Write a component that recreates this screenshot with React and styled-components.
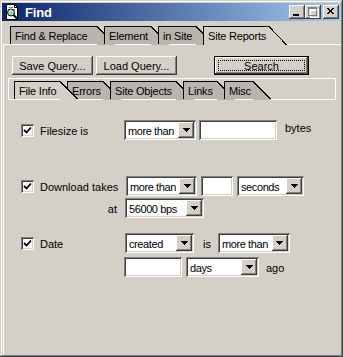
import React from 'react';
import styled, { createGlobalStyle } from 'styled-components';

const face = '#D4D0C8';
const shadow = '#808080';
const dark = '#404040';
const tabFill = '#B9B5AE';

const raised = `inset -1px -1px ${dark}, inset 1px 1px #fff, inset -2px -2px ${shadow}, inset 2px 2px ${face}`;
const sunken = `inset 1px 1px ${shadow}, inset -1px -1px #fff, inset 2px 2px ${dark}, inset -2px -2px ${face}`;

const GlobalStyle = createGlobalStyle`
  html, body {
    margin: 0;
    padding: 0;
    background: ${face};
  }
  body {
    font-family: "Liberation Sans", Arial, sans-serif;
    font-size: 11px;
    color: #000;
  }
  * {
    box-sizing: border-box;
  }
`;

const Window = styled.div`
  width: 343px;
  height: 357px;
  background: ${face};
  padding: 3px 2px 2px 2px;
  display: flex;
  flex-direction: column;
  box-shadow: inset -1px -1px ${dark}, inset 1px 1px ${face}, inset -2px -2px ${shadow}, inset 2px 2px #fff;
`;

const TitleBar = styled.div`
  height: 18px;
  display: flex;
  align-items: center;
  padding: 0 2px;
  background: linear-gradient(to right, #0a246a, #a6caf0);
`;

const TitleText = styled.span`
  margin-left: 5px;
  flex: 1;
  color: #fff;
  font-weight: bold;
  font-size: 13px;
  letter-spacing: -0.2px;
`;

const CapButton = styled.div`
  width: 16px;
  height: 14px;
  margin-left: ${p => p.$gap || 0}px;
  background: ${face};
  box-shadow: ${raised};
  display: flex;
  align-items: center;
  justify-content: center;
`;

const Body = styled.div`
  flex: 1;
  display: flex;
  flex-direction: column;
  margin-top: 5px;
`;

const TabStrip = styled.div`
  display: flex;
  height: 18px;
  padding-left: ${p => p.$inset}px;
`;

const TabShape = styled.div`
  position: relative;
  z-index: ${p => (p.$active ? 5 : 1)};
  width: ${p => p.$w}px;
  height: ${p => (p.$cover ? 19 : 18)}px;
  margin-left: ${p => (p.$first ? 0 : -10)}px;
  margin-right: 17px;
  padding-left: 4px;
  background: ${p => (p.$active ? face : tabFill)};
  border-top: 1px solid #000;
  border-left: 1px solid #000;
  line-height: 18px;
  letter-spacing: -0.2px;
  white-space: nowrap;
`;

const Slant = styled.svg`
  position: absolute;
  left: 100%;
  top: -1px;
  width: 18px;
  height: calc(100% + 1px);
  overflow: visible;
`;

const Panel = styled.div`
  flex: 1;
  margin-left: 1px;
  border-top: 1px solid #fff;
  border-left: 1px solid #fff;
  padding-top: 11px;
  display: flex;
  flex-direction: column;
`;

const ButtonRow = styled.div`
  display: flex;
  height: 19px;
  margin-left: 8px;
`;

const Button = styled.div`
  width: ${p => p.$w}px;
  height: 19px;
  margin-left: ${p => p.$ml || 0}px;
  background: ${face};
  box-shadow: ${raised};
  display: flex;
  align-items: center;
  justify-content: center;
  white-space: nowrap;
`;

const DefaultButton = styled(Button)`
  border: 1px solid #000;
  padding: 3px;
`;

const FocusRing = styled.span`
  flex: 1;
  align-self: stretch;
  display: flex;
  align-items: center;
  justify-content: center;
  border: 1px dotted #000;
`;

const SubFrame = styled.div`
  width: 328px;
  margin: 3px 0 0 4px;
  border: 1px solid #fff;
  padding: 2px 0 0 5px;
`;

const Form = styled.div`
  margin-top: 20px;
  padding-left: 17px;
  display: flex;
  flex-direction: column;
`;

const Row = styled.div`
  display: flex;
  align-items: center;
  height: 20px;
  margin-top: ${p => p.$mt || 0}px;
`;

const Lead = styled.div`
  width: 103px;
  display: flex;
  align-items: center;
  justify-content: ${p => (p.$right ? 'flex-end' : 'flex-start')};
  padding-right: ${p => (p.$right ? 7 : 0)}px;
`;

const Check = styled.span`
  width: 13px;
  height: 13px;
  margin-right: 6px;
  background: #fff;
  box-shadow: ${sunken};
  display: flex;
  align-items: center;
  justify-content: center;
`;

const Text = styled.span`
  margin-left: ${p => p.$ml || 0}px;
  margin-top: ${p => (p.$up ? -4 : 2)}px;
  white-space: nowrap;
`;

const Select = styled.div`
  width: ${p => p.$w}px;
  height: 20px;
  margin-left: ${p => p.$ml || 0}px;
  padding: 2px;
  background: #fff;
  box-shadow: ${sunken};
  display: flex;
  align-items: center;
`;

const SelectText = styled.span`
  flex: 1;
  min-width: 0;
  padding-left: 2px;
  padding-top: 1px;
  letter-spacing: -0.4px;
  white-space: nowrap;
  overflow: hidden;
`;

const DropButton = styled.span`
  flex: none;
  width: 16px;
  height: 16px;
  background: ${face};
  box-shadow: ${raised};
  display: flex;
  align-items: center;
  justify-content: center;
`;

const Input = styled.div`
  width: ${p => p.$w}px;
  height: 20px;
  margin-left: ${p => p.$ml || 0}px;
  background: #fff;
  box-shadow: ${sunken};
`;

const FindIcon = () => (
  <svg width="16" height="16" viewBox="0 0 16 16">
    <path d="M2.5 0.5H10.5L13.5 3.5V15.5H2.5Z" fill="#fff" stroke="#000" />
    <path d="M10.5 0.5V3.5H13.5" fill="none" stroke="#000" />
    <path d="M4.5 3.5H9M4.5 5.5H11" stroke="#808080" />
    <circle cx="7" cy="8.5" r="3.5" fill="#8fe0b0" stroke="#000" />
    <path d="M5.5 7.5a2 2 0 0 1 2-1.5" stroke="#fff" fill="none" />
    <path d="M9.5 11L13 14.5" stroke="#000" strokeWidth="2" />
  </svg>
);

const Arrow = () => (
  <svg width="7" height="4" viewBox="0 0 7 4" shapeRendering="crispEdges">
    <path d="M0 0H7L3.5 4Z" fill="#000" />
  </svg>
);

const Tick = () => (
  <svg width="9" height="9" viewBox="0 0 9 9">
    <path d="M1 4L3.5 6.5L8 1.5" fill="none" stroke="#000" strokeWidth="1.8" />
  </svg>
);

const Tab = ({ w, active, cover, first, children }) => (
  <TabShape $w={w} $active={active} $cover={cover} $first={first}>
    {children}
    <Slant viewBox="0 0 18 18" preserveAspectRatio="none" shapeRendering="crispEdges">
      <path d="M0 0L18 18V19H0Z" fill={active ? face : tabFill} />
      <path d="M0 0.5L17.5 18" stroke="#000" fill="none" />
    </Slant>
  </TabShape>
);

const Combo = ({ w, ml, children }) => (
  <Select $w={w} $ml={ml}>
    <SelectText>{children}</SelectText>
    <DropButton>
      <Arrow />
    </DropButton>
  </Select>
);

const CheckBox = () => (
  <Check>
    <Tick />
  </Check>
);

export default function App() {
  return (
    <>
      <GlobalStyle />
      <Window>
        <TitleBar>
          <FindIcon />
          <TitleText>Find</TitleText>
          <CapButton>
            <svg width="16" height="14" shapeRendering="crispEdges">
              <rect x="4" y="9" width="6" height="2" fill="#000" />
            </svg>
          </CapButton>
          <CapButton>
            <svg width="16" height="14" shapeRendering="crispEdges">
              <path d="M4.5 3.5H12.5V11.5H4.5Z M4.5 4.5H12.5" fill="none" stroke="#fff" transform="translate(1 1)" />
              <path d="M3.5 2.5H11.5V10.5H3.5Z M3.5 3.5H11.5" fill="none" stroke={shadow} />
            </svg>
          </CapButton>
          <CapButton $gap={2}>
            <svg width="16" height="14" shapeRendering="crispEdges">
              <path d="M4 3L10 9M5 3L11 9M10 3L4 9M11 3L5 9" stroke="#000" />
            </svg>
          </CapButton>
        </TitleBar>
        <Body>
          <TabStrip $inset={8}>
            <Tab w={87} first>Find &amp; Replace</Tab>
            <Tab w={47}>Element</Tab>
            <Tab w={38}>in Site</Tab>
            <Tab w={66} active cover>Site Reports</Tab>
          </TabStrip>
          <Panel>
            <ButtonRow>
              <Button $w={81}>Save Query...</Button>
              <Button $w={81} $ml={3}>Load Query...</Button>
              <DefaultButton $w={95} $ml={37}>
                <FocusRing>Search</FocusRing>
              </DefaultButton>
            </ButtonRow>
            <SubFrame>
              <TabStrip $inset={0}>
                <Tab w={46} first active>File Info</Tab>
                <Tab w={36}>Errors</Tab>
                <Tab w={66}>Site Objects</Tab>
                <Tab w={34}>Links</Tab>
                <Tab w={29}>Misc</Tab>
              </TabStrip>
            </SubFrame>
            <Form>
              <Row>
                <Lead>
                  <CheckBox />
                  <Text>Filesize is</Text>
                </Lead>
                <Combo w={72}>more than</Combo>
                <Input $w={78} $ml={3} />
                <Text $ml={8} $up>bytes</Text>
              </Row>
              <Row $mt={36}>
                <Lead>
                  <CheckBox />
                  <Text>Download takes</Text>
                </Lead>
                <Combo w={71} ml={2}>more than</Combo>
                <Input $w={32} $ml={4} />
                <Combo w={67} ml={4}>seconds</Combo>
              </Row>
              <Row $mt={2}>
                <Lead $right>
                  <Text>at</Text>
                </Lead>
                <Combo w={79} ml={1}>56000 bps</Combo>
              </Row>
              <Row $mt={15}>
                <Lead>
                  <CheckBox />
                  <Text>Date</Text>
                </Lead>
                <Combo w={69} ml={1}>created</Combo>
                <Text $ml={9}>is</Text>
                <Combo w={72} ml={7}>more than</Combo>
              </Row>
              <Row $mt={4}>
                <Lead />
                <Input $w={58} />
                <Combo w={73} ml={4}>days</Combo>
                <Text $ml={7}>ago</Text>
              </Row>
            </Form>
          </Panel>
        </Body>
      </Window>
    </>
  );
}
